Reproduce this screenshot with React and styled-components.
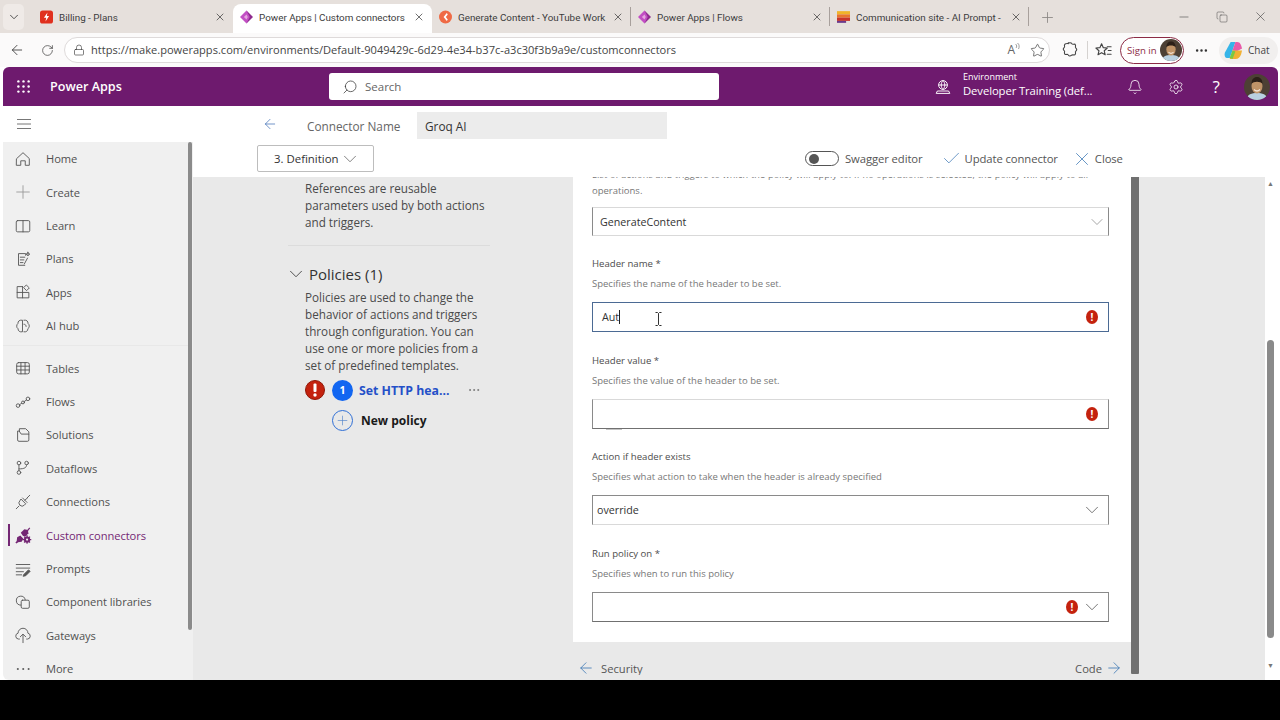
import React from "react";
import styled, { createGlobalStyle } from "styled-components";
import {
  ArrowLeft,
  ArrowRight,
  Bell,
  Check,
  ChevronDown,
  Copy,
  Lock,
  Minus,
  MoreHorizontal,
  Plus,
  RotateCw,
  Search as SearchIcon,
  Settings,
  Star,
  X,
} from "lucide-react";

const GlobalStyle = createGlobalStyle`
  html, body {
    margin: 0;
    padding: 0;
    background: #000;
    overflow: hidden;
  }
  body {
    font-family: "Open Sans", "Liberation Sans", sans-serif;
    color: #333;
  }
  * { box-sizing: border-box; }
`;

const Frame = styled.div`
  width: 1280px;
  height: 680px;
  display: flex;
  flex-direction: column;
  overflow: hidden;
  background: #fff;
`;

/* browser chrome */

const TabStrip = styled.div`
  height: 33px;
  flex: none;
  display: flex;
  align-items: flex-end;
  padding-left: 3px;
  background: #e6e0dc;
`;

const TabListButton = styled.div`
  width: 21px;
  height: 26px;
  margin: 0 9px 3px 0;
  border-radius: 5px;
  background: #efeae7;
  display: flex;
  align-items: center;
  justify-content: center;
  color: #333;
`;

const Tab = styled.div`
  width: ${(p) => p.$w}px;
  height: 29px;
  flex: none;
  display: flex;
  align-items: center;
  gap: 6px;
  padding: 0 7px 3px;
  font-family: Roboto, "Liberation Sans", sans-serif;
  font-size: 9.85px;
  color: #3c3c3c;
  border-radius: 8px 8px 0 0;
  background: ${(p) => (p.$active ? "#fff" : "transparent")};
  position: relative;
  ${(p) =>
    p.$sep &&
    `&::after {
      content: "";
      position: absolute;
      right: 0;
      top: 3px;
      height: 19px;
      width: 1px;
      background: #a8a09c;
    }`}
`;

const TabTitle = styled.span`
  flex: 1;
  min-width: 0;
  white-space: nowrap;
  overflow: hidden;
`;

const NewTab = styled.div`
  margin: 0 0 7px 10px;
  color: #8a8583;
  display: flex;
`;

const WindowControls = styled.div`
  margin-left: auto;
  height: 33px;
  display: flex;
  align-items: center;
  gap: 25px;
  padding-right: 12px;
  color: #444;
`;

const AddressBar = styled.div`
  height: 34px;
  flex: none;
  display: flex;
  align-items: center;
  padding: 0 2px 0 9px;
  background: #fbfafa;
  color: #3a3a3a;
`;

const NavButtons = styled.div`
  width: 55px;
  display: flex;
  align-items: center;
  gap: 16px;
  flex: none;
`;

const UrlPill = styled.div`
  width: 986px;
  height: 26px;
  flex: none;
  display: flex;
  align-items: center;
  gap: 6px;
  padding: 0 4px 0 8px;
  border: 1px solid #dedada;
  border-radius: 13px;
  background: #fff;
`;

const UrlText = styled.span`
  flex: 1;
  font-size: 11.08px;
  line-height: 14px;
  margin-top: -1px;
  color: #444;
  white-space: nowrap;
`;

const ReadAloud = styled.span`
  display: flex;
  align-items: flex-start;
  font-size: 12px;
  line-height: 14px;
  color: #666;
  margin-right: 4px;
`;

const ChromeIcons = styled.div`
  display: flex;
  align-items: center;
  margin-left: 11px;
  color: #444;
`;

const ChromeSep = styled.div`
  width: 1px;
  height: 18px;
  margin: 0 6px 0 8px;
  background: #d5d2d0;
`;

const SignIn = styled.div`
  width: 64px;
  height: 27px;
  flex: none;
  margin-left: 7px;
  display: flex;
  align-items: center;
  justify-content: space-between;
  padding: 0 1px 0 6px;
  border: 1px solid #8c2b45;
  border-radius: 14px;
  font-size: 9.6px;
  white-space: nowrap;
  color: #8c2b45;
  background: #fff;
`;

const MoreDots = styled.div`
  width: 35px;
  flex: none;
  display: flex;
  justify-content: center;
  color: #333;
`;

const ChatPill = styled.div`
  width: 59px;
  height: 27px;
  flex: none;
  display: flex;
  align-items: center;
  gap: 5px;
  padding-left: 5px;
  border-radius: 14px;
  background: #f1efee;
  font-size: 10px;
  color: #444;
`;

/* power apps header */

const AppHeader = styled.div`
  height: 39px;
  flex: none;
  margin: 0 2px 0 3px;
  display: flex;
  align-items: center;
  background: #6e1a6e;
  border-radius: 6px 6px 0 0;
  color: #fff;
`;

const Waffle = styled.div`
  width: 40px;
  flex: none;
  display: flex;
  justify-content: center;
`;

const Brand = styled.div`
  width: 286px;
  flex: none;
  padding-left: 7px;
  font-size: 12.6px;
  font-weight: 600;
`;

const SearchBox = styled.div`
  width: 390px;
  height: 27px;
  flex: none;
  display: flex;
  align-items: center;
  gap: 7px;
  padding-left: 13px;
  background: #fff;
  border-radius: 3px;
  font-size: 11.5px;
  color: #666;
`;

const MirroredSearch = styled(SearchIcon)`
  transform: scaleX(-1);
`;

const EnvironmentIcon = styled.div`
  margin-left: 216px;
  width: 28px;
  flex: none;
  display: flex;
`;

const EnvironmentInfo = styled.div`
  width: 152px;
  flex: none;
  display: flex;
  flex-direction: column;
  margin-top: -4px;
`;

const EnvLabel = styled.span`
  font-size: 9px;
  line-height: 12px;
`;

const EnvName = styled.span`
  font-size: 11.3px;
  line-height: 15px;
  letter-spacing: -0.1px;
  white-space: nowrap;
`;

const HeaderIcon = styled.div`
  width: 40.5px;
  flex: none;
  display: flex;
  justify-content: center;
  font-size: 17px;
`;

/* body */

const Body = styled.div`
  flex: 1;
  min-height: 0;
  display: flex;
  padding-left: 3px;
  background: #fff;
`;

const Sidebar = styled.nav`
  width: 190px;
  flex: none;
  display: flex;
  flex-direction: column;
`;

const Hamburger = styled.div`
  height: 36px;
  flex: none;
  display: flex;
  align-items: center;
  padding-left: 14px;
  color: #777;
`;

const SideBody = styled.div`
  flex: 1;
  min-height: 0;
  display: flex;
  background: #f0f0f0;
  border-bottom-left-radius: 6px;
  overflow: hidden;
`;

const SideList = styled.div`
  flex: 1;
  min-width: 0;
  display: flex;
  flex-direction: column;
`;

const SideItem = styled.div`
  height: 33.42px;
  flex: none;
  display: flex;
  align-items: center;
  position: relative;
  padding-left: 11px;
  gap: 13px;
  font-size: 11.15px;
  letter-spacing: -0.05px;
  color: ${(p) => (p.$active ? "#742774" : "#505050")};
  ${(p) =>
    p.$active &&
    `&::before {
      content: "";
      position: absolute;
      left: 5px;
      top: 6px;
      bottom: 6px;
      width: 2px;
      background: #742774;
    }`}
`;

const SideIconBox = styled.span`
  width: 18px;
  height: 19px;
  flex: none;
  margin-right: 1px;
  display: flex;
  align-items: center;
  justify-content: center;
`;

const SideDivider = styled.div`
  height: 1px;
  flex: none;
  margin: 3px 0 5px;
  background: #e8e8e8;
`;

const SideScroll = styled.div`
  width: 4px;
  flex: none;
  margin-right: 1px;
  margin-bottom: 50px;
  background: #8b8b8b;
  border-radius: 2px;
`;

const Main = styled.div`
  flex: 1;
  min-width: 0;
  display: flex;
  flex-direction: column;
`;

const NameRow = styled.div`
  height: 36px;
  flex: none;
  display: flex;
  align-items: center;
  padding: 3px 0 0 69px;
`;

const BackLink = styled.div`
  width: 45px;
  flex: none;
  color: #3f6fb5;
  display: flex;
  margin-top: -3px;
`;

const NameLabel = styled.div`
  width: 110px;
  flex: none;
  font-size: 11.8px;
  color: #666;
`;

const NameInput = styled.div`
  width: 250px;
  height: 27px;
  flex: none;
  display: flex;
  align-items: center;
  padding-left: 8px;
  background: #ececec;
  font-size: 11.8px;
  color: #333;
`;

const CommandBar = styled.div`
  height: 35px;
  flex: none;
  display: flex;
  align-items: center;
  padding: 0 0 2px 64px;
`;

const StepButton = styled.div`
  width: 117px;
  height: 27px;
  flex: none;
  display: flex;
  align-items: center;
  gap: 1px;
  padding-left: 16px;
  border: 1px solid #bdbdbd;
  border-radius: 2px;
  font-size: 11.4px;
  color: #333;
  background: #fff;
`;

const Toggle = styled.div`
  width: 34px;
  height: 15px;
  flex: none;
  margin-left: 431px;
  padding-left: 3px;
  display: flex;
  align-items: center;
  border: 1px solid #555;
  border-radius: 8px;
`;

const ToggleKnob = styled.span`
  width: 10px;
  height: 10px;
  border-radius: 50%;
  background: #555;
`;

const CommandItem = styled.div`
  display: flex;
  align-items: center;
  gap: ${(p) => p.$gap}px;
  margin-left: ${(p) => p.$left}px;
  font-size: 11.3px;
  letter-spacing: -0.1px;
  color: #555;
  white-space: nowrap;
`;

const Workspace = styled.div`
  flex: 1;
  min-height: 0;
  display: flex;
  background: #e9e9e9;
`;

const StepsPanel = styled.div`
  width: 380px;
  flex: none;
  display: flex;
  flex-direction: column;
  padding: 3px 83px 0 95px;
`;

const StepText = styled.p`
  margin: ${(p) => p.$top || 0}px 3px 0 17px;
  font-size: 11.7px;
  line-height: 16.8px;
  color: #4a4a4a;
`;

const StepDivider = styled.div`
  height: 1px;
  margin: 15px 0 14px;
  background: #dcdcdc;
`;

const SectionTitle = styled.div`
  display: flex;
  align-items: center;
  gap: 2px;
  height: 28px;
  margin-left: -3px;
  font-size: 15px;
  color: #333;
`;

const PolicyRow = styled.div`
  display: flex;
  align-items: center;
  margin: 6px 0 0 17px;
  height: 22px;
`;

const NewPolicyRow = styled(PolicyRow)`
  margin-top: 8px;
  padding-left: 27px;
`;

const ErrorSlot = styled.span`
  display: flex;
  width: 27px;
  flex: none;
`;

const StepBadge = styled.span`
  width: 21px;
  height: 21px;
  flex: none;
  display: flex;
  align-items: center;
  justify-content: center;
  border-radius: 50%;
  background: #1266f1;
  color: #fff;
  font-size: 10.5px;
  font-weight: 700;
`;

const PolicyName = styled.span`
  margin-left: 6px;
  width: 108px;
  flex: none;
  font-size: 12.3px;
  font-weight: 700;
  color: #2450c8;
  white-space: nowrap;
`;

const PlusCircle = styled.span`
  width: 21px;
  height: 21px;
  flex: none;
  display: flex;
  align-items: center;
  justify-content: center;
  border-radius: 50%;
  border: 1px solid #2f6fd6;
  color: #4a7fc8;
`;

const NewPolicyLabel = styled.span`
  margin-left: 8px;
  font-size: 12px;
  font-weight: 700;
  color: #1a1a1a;
`;

const FormColumn = styled.div`
  width: 558px;
  flex: none;
  display: flex;
  flex-direction: column;
`;

const FormCard = styled.div`
  height: 465px;
  flex: none;
  overflow: hidden;
  padding: 0 22px 0 19px;
  background: #fff;
`;

const ClippedLine = styled.div`
  margin-top: -9px;
  height: 13px;
  font-size: 9.1px;
  line-height: 13px;
  color: #777;
  white-space: nowrap;
  letter-spacing: 0.18px;
`;

const Hint = styled.div`
  height: 20px;
  font-size: 9.5px;
  line-height: 20px;
  color: #777;
  white-space: nowrap;
`;

const TopHint = styled(Hint)`
  height: 13px;
  line-height: 13px;
  margin-top: 3px;
`;

const FieldLabel = styled.div`
  height: 20px;
  margin-top: 18.7px;
  font-size: 9.6px;
  line-height: 20px;
  color: #4d4d4d;
  white-space: nowrap;
`;

const Control = styled.div`
  height: 30px;
  margin-top: 8px;
  position: relative;
  display: flex;
  align-items: center;
  gap: ${(p) => p.$gap || 8}px;
  padding: 0 ${(p) => p.$padRight ?? 10}px 0 ${(p) => p.$pad || 7}px;
  border: 1px solid ${(p) => (p.$focus ? "#4b6a94" : "#8a8a8a")};
  border-top-color: ${(p) => (p.$focus ? "#4b6a94" : p.$softTop ? "#d9d9d9" : "#8a8a8a")};
  border-bottom-color: ${(p) => (p.$focus ? "#4b6a94" : p.$softBottom ? "#d9d9d9" : "#707070")};
  background: #fff;
  font-size: 10.7px;
  color: #333;
  ${(p) =>
    p.$mark &&
    `&::after {
      content: "";
      position: absolute;
      left: 13px;
      bottom: -2px;
      width: 16px;
      height: 1px;
      background: #c4c4c4;
    }`}
`;

const FirstSelect = styled(Control)`
  height: 29px;
  margin-top: 10px;
  margin-bottom: -0.7px;
`;

const ControlValue = styled.span`
  flex: 1;
  min-width: 0;
  display: flex;
  align-items: center;
`;

const Caret = styled.span`
  width: 1px;
  height: 14px;
  background: #222;
`;

const IBeam = styled.span`
  position: absolute;
  left: 62px;
  top: 9px;
  display: flex;
  color: #333;
`;

const ErrorDot = styled.span`
  width: 12px;
  height: 14px;
  flex: none;
  display: flex;
  align-items: center;
  justify-content: center;
  border-radius: 50%;
  background: #c4220e;
  color: #fff;
  font-size: 10px;
  font-weight: 700;
  line-height: 1;
`;

const PagerRow = styled.div`
  flex: 1;
  display: flex;
  align-items: flex-start;
  justify-content: space-between;
  padding: 19px 8px 0 4px;
  font-size: 11.2px;
  color: #555;
`;

const PagerLink = styled.div`
  display: flex;
  align-items: flex-start;
  gap: ${(p) => p.$gap}px;
  height: 14px;
  line-height: 16px;
  overflow: hidden;
  color: #555;
`;

const PagerIcon = styled.span`
  display: flex;
  margin-top: -2px;
`;

const FormScroll = styled.div`
  width: 8px;
  flex: none;
  height: 497px;
  background: #707070;
  border-radius: 0 0 1px 1px;
`;

const RightGutter = styled.div`
  width: 126px;
  flex: none;
`;

const PageScroll = styled.div`
  width: 15px;
  flex: none;
  display: flex;
  flex-direction: column;
  align-items: center;
  background: #fff;
  padding: 3px 4px 0 0;
`;

const ScrollArrow = styled.span`
  font-size: 7px;
  line-height: 7px;
  color: #777;
  flex: none;
`;

const ScrollThumb = styled.span`
  width: 7px;
  height: 298px;
  margin: 153px 0 24px;
  flex: none;
  border-radius: 4px;
  background: #8a8a8a;
`;

const BottomBlack = styled.div`
  height: 40px;
  background: #000;
`;

const RoundSvg = styled.svg`
  flex: none;
  border-radius: 50%;
`;

/* drawn icons */

const Stroke = ({ size = 18, color = "#555", children }) => (
  <svg width={size} height={size} viewBox="0 0 20 20" fill="none" stroke={color} strokeWidth="1" strokeLinecap="round" strokeLinejoin="round">
    {children}
  </svg>
);

const sideIcons = {
  home: <path d="M3 9.5 10 3l7 6.5V17h-4.5v-5h-5v5H3z" />,
  plus: (
    <>
      <path d="M10 3v14M3 10h14" stroke="#999" />
    </>
  ),
  learn: (
    <>
      <rect x="2.5" y="4" width="15" height="12.5" rx="1.5" />
      <path d="M10 4v12.5" />
    </>
  ),
  plans: (
    <>
      <path d="M13 6V4H5v13h7" />
      <path d="M7 8h5M7 11h4M7 14h3" />
      <path d="m15.5 2.5.6 1.5 1.5.6-1.5.6-.6 1.5-.6-1.5-1.5-.6 1.5-.6zM15 9l-3.5 6.5" />
    </>
  ),
  apps: (
    <>
      <path d="M9.5 4H3.5v12.5h13V10.5H3.5M9.5 4v12.5" />
      <path d="m14 2.5 3 3-3 3-3-3z" />
    </>
  ),
  ai: (
    <>
      <path d="M9 3.5C6 3 4 5 4.5 7 2.5 8.5 2.5 12 4.5 13c-.2 2.5 2 4 4.5 3.5z" />
      <path d="M11 3.5c3-.5 5 1.5 4.5 3.5 2 1.5 2 5-.1 6 .2 2.5-1.900 4-4.400 3.500" />
      <path d="M11 8c1.500 0 2.500 1 2.500 2.500" />
    </>
  ),
  tables: (
    <>
      <rect x="3" y="4" width="14" height="12.5" rx="2" />
      <path d="M3 8h14M3 12.200h14M7.700 4v12.500M12.300 4v12.500" />
    </>
  ),
  flows: (
    <>
      <circle cx="4.500" cy="14" r="2" />
      <circle cx="10" cy="10.500" r="1.600" />
      <circle cx="15.500" cy="6.500" r="2" />
      <path d="m6.200 13 2.400-1.700M11.400 9.500l2.500-1.800" />
    </>
  ),
  solutions: (
    <>
      <path d="M6 6V3h7l3.500 3.500V9" />
      <path d="M4 6v9.500A1.500 1.500 0 0 0 5.500 17H15a1.500 1.500 0 0 0 1.500-1.500V9H8L6 6z" />
    </>
  ),
  dataflows: (
    <>
      <circle cx="5.500" cy="4.500" r="2" />
      <circle cx="14" cy="4.500" r="2" />
      <circle cx="5.500" cy="15" r="2" />
      <path d="M5.500 6.500V13M14 6.500c0 3-2 4.500-8.500 4.500" />
    </>
  ),
  connections: (
    <>
      <path d="m2.500 17.500 3-3M14.500 5.500l3-3" />
      <path d="m8 7 5 5-1.500 1.500a3.500 3.500 0 0 1-5-5zM9.500 5.500l5 5" />
      <path d="M12 8l3-2.500" />
    </>
  ),
  prompts: (
    <>
      <path d="M2.500 5h15M2.500 9h15M2.500 13h8M2.500 16.500h6" />
      <path d="m11 16 5-5 2 1.500-5 5-2.500.5z" fill="#555" />
    </>
  ),
  libraries: (
    <>
      <path d="M7.500 13.500a5 5 0 1 1 5-6" />
      <rect x="8" y="8" width="9" height="9" rx="1.500" />
    </>
  ),
  gateways: (
    <>
      <path d="M6 14.500H5a3.300 3.300 0 0 1-.5-6.500 5.500 5.500 0 0 1 11 0 3.300 3.300 0 0 1-.5 6.500h-1" />
      <path d="M10 18.500v-9M7 12l3-3 3 3" />
    </>
  ),
  more: <path d="M4 10h.5M10 10h.5M16 10h.5" strokeWidth="1.800" stroke="#333" />,
};

const CustomConnectorIcon = () => (
  <svg width="19" height="19" viewBox="0 0 20 20" fill="#742774">
    <path d="M1.500 18l1.500-2 .5-4 3.500-2 3.500 3.500-2 3.500-4 .5-1.500 1.500z" />
    <path d="M7.500 7l4-4 4 1 .5 3.500-3 3.500-3-.5z" />
    <path d="M15 4.500l2.500-3" stroke="#742774" strokeWidth="1.400" />
    <circle cx="14.500" cy="14.500" r="3.500" />
    <path d="M14.500 9.800v9.400M9.800 14.500h9.400M11.200 11.200l6.600 6.600M17.800 11.200l-6.600 6.600" stroke="#742774" strokeWidth="1.300" />
    <circle cx="14.500" cy="14.500" r="1.200" fill="#f0f0f0" />
  </svg>
);

const PowerAppsLogo = () => (
  <svg width="13" height="14" viewBox="0 0 20 20">
    <path d="M10 0 20 10 10 20z" fill="#8e2a8e" />
    <path d="M10 0 0 10l10 10 5-10z" fill="#c24fc4" />
    <path d="M10 6 6 10l4 4 2-4z" fill="#e5a6df" />
  </svg>
);

const BillingLogo = () => (
  <svg width="13" height="14" viewBox="0 0 20 20">
    <rect width="20" height="20" rx="4" fill="#e0301e" />
    <path d="M11.500 3 6 11h3.500L8.500 17 14 8.500h-3.500z" fill="#fff" />
  </svg>
);

const YoutubeWorkLogo = () => (
  <svg width="13" height="14" viewBox="0 0 20 20">
    <circle cx="10" cy="10" r="10" fill="#ef6a45" />
    <path d="M12 4 7 10l5 6 1.500-2-3-4 3-4z" fill="#fff" />
  </svg>
);

const SharePointLogo = () => (
  <svg width="13" height="14" viewBox="0 0 20 20">
    <rect y="1" width="20" height="5" fill="#f0b429" />
    <rect y="6" width="20" height="5" fill="#e8762c" />
    <rect y="11" width="20" height="5" fill="#c8352b" />
    <rect y="16" width="14" height="3" fill="#6b3a8c" />
  </svg>
);

const CopilotLogo = () => (
  <svg width="19" height="19" viewBox="0 0 20 20">
    <path d="M7 1h5l-3 9-3 8H4C1 18 0 15 1 12z" fill="#35b4e8" />
    <path d="M12 1h2c3 0 4 3 5 7l-6 3-4-1z" fill="#e85ba8" />
    <path d="M9 10h10l-1 4c-1 3-3 5-6 5H6z" fill="#f2b134" />
    <path d="M6 18l3-8 3 1-3 8z" fill="#7ac943" />
  </svg>
);

const Avatar = ({ size }) => (
  <RoundSvg width={size} height={size} viewBox="0 0 26 26">
    <rect width="26" height="26" fill="#4d4034" />
    <path d="M2 26c1-6 6-7 11-7s10 1 11 7z" fill="#b9d0e0" />
    <ellipse cx="13" cy="12" rx="5.500" ry="7.500" fill="#c09468" />
    <path d="M7.500 10c0-5 2.500-7 5.500-7s5.500 2 5.500 7c-2-3-9-3-11 0z" fill="#2c2018" />
    <path d="M10 15.500c1.800 1.800 4.200 1.800 6 0" stroke="#f3e6d8" strokeWidth="1.200" fill="none" />
  </RoundSvg>
);

const WaffleIcon = () => (
  <svg width="13" height="13" viewBox="0 0 14 14" fill="#fff">
    {[1.5, 7, 12.5].flatMap((y) =>
      [1.5, 7, 12.5].map((x) => <circle key={`${x}-${y}`} cx={x} cy={y} r="1.300" />)
    )}
  </svg>
);

const EnvIcon = () => (
  <svg width="16" height="16" viewBox="0 0 20 20" fill="none" stroke="#fff" strokeWidth="1.200">
    <circle cx="10" cy="7.500" r="5.500" />
    <path d="M4.500 7.500h11M10 2c-3 3-3 8 0 11M10 2c3 3 3 8 0 11" />
    <path d="M3 15h14l1.500 3h-17z" />
  </svg>
);

const ReadAloudWaves = () => (
  <svg width="5" height="8" viewBox="0 0 5 8" fill="none" stroke="#777" strokeWidth="0.7">
    <path d="M.5 1c1.500 1 1.500 3 .5 4M2.500 0c2 1.500 2 4 1 6" />
  </svg>
);

const ExtensionIcon = () => (
  <svg width="18" height="18" viewBox="0 0 20 20" fill="none" stroke="#444" strokeWidth="1.200" strokeLinejoin="round">
    <path d="M8 3c.5-1.500 3.500-1.500 4 0 .3 1 2 .5 3 .5s1.500 2 1 3c-.5 1 1.500 1.500 1.500 3s-2 2-1.500 3 0 3-1.500 3-2-.5-3 .5-3 1-3.500-.5c-.3-1-2-.5-3-.5s-1.500-2-1-3c.5-1-1.500-1.500-1.500-3s2-2 1.500-3 0-3 1.500-3 2.500-.3 3-1z" />
  </svg>
);

const FavoritesIcon = () => (
  <svg width="19" height="19" viewBox="0 0 20 20" fill="none" stroke="#444" strokeWidth="1.200" strokeLinejoin="round" strokeLinecap="round">
    <path d="M8 3l1.800 4 4.200.4-3.200 2.900 1 4.200L8 12.300l-3.800 2.200 1-4.200L2 7.400 6.200 7z" />
    <path d="M14 6h4M15 10h3M14 14h4" />
  </svg>
);

const IBeamIcon = () => (
  <svg width="7" height="14" viewBox="0 0 7 14" fill="none" stroke="#333" strokeWidth="1">
    <path d="M.5.500h2l1 1 1-1h2M3.500 1.500v11M.5 13.500h2l1-1 1 1h2" />
  </svg>
);

const BigError = () => (
  <svg width="20" height="20" viewBox="0 0 20 20">
    <circle cx="10" cy="10" r="9.500" fill="#c4220e" stroke="#8f1808" strokeWidth="1" />
    <rect x="8.500" y="3.500" width="3" height="8.500" rx="1" fill="#fff" />
    <circle cx="10" cy="15" r="1.700" fill="#fff" />
  </svg>
);

const sideTop = [
  ["Home", "home"],
  ["Create", "plus"],
  ["Learn", "learn"],
  ["Plans", "plans"],
  ["Apps", "apps"],
  ["AI hub", "ai"],
];

const sideRest = [
  ["Tables", "tables"],
  ["Flows", "flows"],
  ["Solutions", "solutions"],
  ["Dataflows", "dataflows"],
  ["Connections", "connections"],
  ["Custom connectors", "custom"],
  ["Prompts", "prompts"],
  ["Component libraries", "libraries"],
  ["Gateways", "gateways"],
  ["More", "more"],
];

const SideLink = ({ label, icon }) => (
  <SideItem $active={icon === "custom"}>
    <SideIconBox>
      {icon === "custom" ? <CustomConnectorIcon /> : <Stroke>{sideIcons[icon]}</Stroke>}
    </SideIconBox>
    {label}
  </SideItem>
);

const tabs = [
  { title: "Billing - Plans", logo: <BillingLogo />, w: 200 },
  { title: "Power Apps | Custom connectors", logo: <PowerAppsLogo />, w: 199, active: true },
  { title: "Generate Content - YouTube Work", logo: <YoutubeWorkLogo />, w: 199, sep: true },
  { title: "Power Apps | Flows", logo: <PowerAppsLogo />, w: 199, sep: true },
  { title: "Communication site - AI Prompt -", logo: <SharePointLogo />, w: 199, sep: true },
];

const Field = ({ label, hint, children }) => (
  <>
    <FieldLabel>{label}</FieldLabel>
    <Hint>{hint}</Hint>
    {children}
  </>
);

export default function App() {
  return (
    <>
      <GlobalStyle />
      <Frame>
        <TabStrip>
          <TabListButton>
            <ChevronDown size={14} strokeWidth={1.4} />
          </TabListButton>
          {tabs.map((t) => (
            <Tab key={t.title} $w={t.w} $active={t.active} $sep={t.sep}>
              {t.logo}
              <TabTitle>{t.title}</TabTitle>
              <X size={12} strokeWidth={1.4} color="#333" />
            </Tab>
          ))}
          <NewTab>
            <Plus size={17} strokeWidth={1.2} />
          </NewTab>
          <WindowControls>
            <Minus size={14} strokeWidth={1} />
            <Copy size={12} strokeWidth={1} />
            <X size={15} strokeWidth={1} />
          </WindowControls>
        </TabStrip>

        <AddressBar>
          <NavButtons>
            <ArrowLeft size={16} strokeWidth={1.3} />
            <RotateCw size={13} strokeWidth={1.3} />
          </NavButtons>
          <UrlPill>
            <Lock size={12} strokeWidth={1.3} />
            <UrlText>https://make.powerapps.com/environments/Default-9049429c-6d29-4e34-b37c-a3c30f3b9a9e/customconnectors</UrlText>
            <ReadAloud>
              A
              <ReadAloudWaves />
            </ReadAloud>
            <Star size={15} strokeWidth={1.1} />
          </UrlPill>
          <ChromeIcons>
            <ExtensionIcon />
            <ChromeSep />
            <FavoritesIcon />
          </ChromeIcons>
          <SignIn>
            Sign in
            <Avatar size={22} />
          </SignIn>
          <MoreDots>
            <MoreHorizontal size={15} />
          </MoreDots>
          <ChatPill>
            <CopilotLogo />
            Chat
          </ChatPill>
        </AddressBar>

        <AppHeader>
          <Waffle>
            <WaffleIcon />
          </Waffle>
          <Brand>Power Apps</Brand>
          <SearchBox>
            <MirroredSearch size={16} strokeWidth={1.1} color="#333" />
            Search
          </SearchBox>
          <EnvironmentIcon>
            <EnvIcon />
          </EnvironmentIcon>
          <EnvironmentInfo>
            <EnvLabel>Environment</EnvLabel>
            <EnvName>Developer Training (def...</EnvName>
          </EnvironmentInfo>
          <HeaderIcon>
            <Bell size={16} strokeWidth={1.2} />
          </HeaderIcon>
          <HeaderIcon>
            <Settings size={16} strokeWidth={1.2} />
          </HeaderIcon>
          <HeaderIcon>?</HeaderIcon>
          <HeaderIcon>
            <Avatar size={26} />
          </HeaderIcon>
        </AppHeader>

        <Body>
          <Sidebar>
            <Hamburger>
              <svg width="14" height="12" viewBox="0 0 14 12" stroke="#777" strokeWidth="1">
                <path d="M0 1.500h14M0 6h14M0 10.500h14" />
              </svg>
            </Hamburger>
            <SideBody>
              <SideList>
                {sideTop.map(([label, icon]) => (
                  <SideLink key={label} label={label} icon={icon} />
                ))}
                <SideDivider />
                {sideRest.map(([label, icon]) => (
                  <SideLink key={label} label={label} icon={icon} />
                ))}
              </SideList>
              <SideScroll />
            </SideBody>
          </Sidebar>

          <Main>
            <NameRow>
              <BackLink>
                <ArrowLeft size={16} strokeWidth={1.1} />
              </BackLink>
              <NameLabel>Connector Name</NameLabel>
              <NameInput>Groq AI</NameInput>
            </NameRow>
            <CommandBar>
              <StepButton>
                3. Definition
                <ChevronDown size={22} strokeWidth={0.8} color="#555" />
              </StepButton>
              <Toggle>
                <ToggleKnob />
              </Toggle>
              <CommandItem $left={6}>Swagger editor</CommandItem>
              <CommandItem $left={18} $gap={3}>
                <Check size={21} strokeWidth={0.8} color="#2f6fb0" />
                Update connector
              </CommandItem>
              <CommandItem $left={13} $gap={2}>
                <X size={22} strokeWidth={0.8} color="#2f6fb0" />
                Close
              </CommandItem>
            </CommandBar>
            <Workspace>
              <StepsPanel>
                <StepText>
                  References are reusable parameters used by both actions and triggers.
                </StepText>
                <StepDivider />
                <SectionTitle>
                  <ChevronDown size={22} strokeWidth={0.9} color="#333" />
                  Policies (1)
                </SectionTitle>
                <StepText $top={1}>
                  Policies are used to change the behavior of actions and triggers through configuration. You can use one or more policies from a set of predefined templates.
                </StepText>
                <PolicyRow>
                  <ErrorSlot>
                    <BigError />
                  </ErrorSlot>
                  <StepBadge>1</StepBadge>
                  <PolicyName>Set HTTP hea...</PolicyName>
                  <MoreHorizontal size={14} strokeWidth={1.2} color="#666" />
                </PolicyRow>
                <NewPolicyRow>
                  <PlusCircle>
                    <Plus size={15} strokeWidth={1} />
                  </PlusCircle>
                  <NewPolicyLabel>New policy</NewPolicyLabel>
                </NewPolicyRow>
              </StepsPanel>

              <FormColumn>
                <FormCard>
                  <ClippedLine>List of actions and triggers to which the policy will apply to. If no operations is selected, the policy will apply to all</ClippedLine>
                  <TopHint>operations.</TopHint>
                  <FirstSelect $softTop $softBottom $padRight={1}>
                    <ControlValue>GenerateContent</ControlValue>
                    <ChevronDown size={20} strokeWidth={0.7} color="#666" />
                  </FirstSelect>
                  <Field label="Header name *" hint="Specifies the name of the header to be set.">
                    <Control $focus $pad={9}>
                      <ControlValue>
                        Aut
                        <Caret />
                      </ControlValue>
                      <IBeam>
                        <IBeamIcon />
                      </IBeam>
                      <ErrorDot>!</ErrorDot>
                    </Control>
                  </Field>
                  <Field label="Header value *" hint="Specifies the value of the header to be set.">
                    <Control $softTop $mark>
                      <ControlValue />
                      <ErrorDot>!</ErrorDot>
                    </Control>
                  </Field>
                  <Field label="Action if header exists" hint="Specifies what action to take when the header is already specified">
                    <Control $softBottom $pad={4} $padRight={5}>
                      <ControlValue>override</ControlValue>
                      <ChevronDown size={22} strokeWidth={0.8} color="#444" />
                    </Control>
                  </Field>
                  <Field label="Run policy on *" hint="Specifies when to run this policy">
                    <Control $padRight={5} $gap={3}>
                      <ControlValue />
                      <ErrorDot>!</ErrorDot>
                      <ChevronDown size={22} strokeWidth={0.8} color="#444" />
                    </Control>
                  </Field>
                </FormCard>
                <PagerRow>
                  <PagerLink $gap={6}>
                    <PagerIcon>
                      <ArrowLeft size={18} strokeWidth={1} color="#2f6fb0" />
                    </PagerIcon>
                    Security
                  </PagerLink>
                  <PagerLink $gap={3}>
                    Code
                    <PagerIcon>
                      <ArrowRight size={18} strokeWidth={1} color="#2f6fb0" />
                    </PagerIcon>
                  </PagerLink>
                </PagerRow>
              </FormColumn>

              <FormScroll />
              <RightGutter />
              <PageScroll>
                <ScrollArrow>▲</ScrollArrow>
                <ScrollThumb />
                <ScrollArrow>▼</ScrollArrow>
              </PageScroll>
            </Workspace>
          </Main>
        </Body>
      </Frame>
      <BottomBlack />
    </>
  );
}
